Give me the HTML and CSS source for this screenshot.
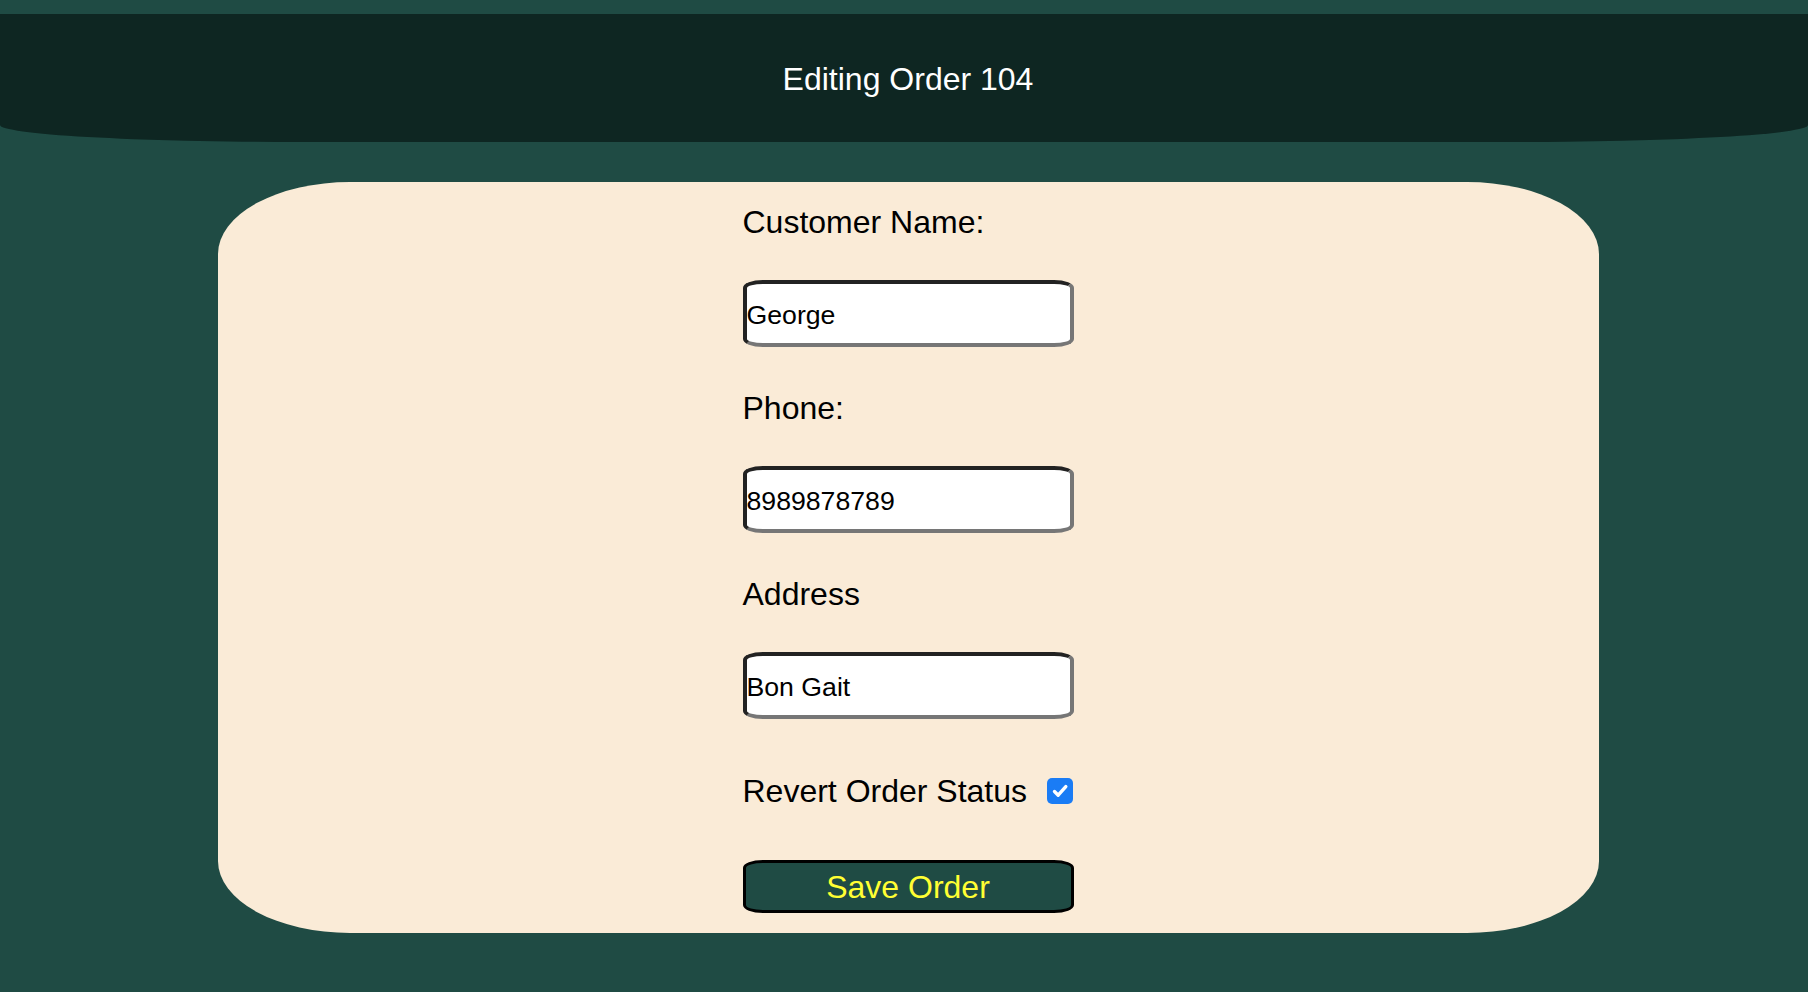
FILE: index.html
```html
<!DOCTYPE html>
<html lang="en">
<head>
<meta charset="utf-8">
<title>Editing Order 104</title>
<link rel="stylesheet" href="styles.css">
</head>
<body>
<header class="topbar">
  <h1 class="title">Editing Order 104</h1>
</header>
<main class="page">
  <form class="card">
    <div class="fields">
      <label class="label" for="name">Customer Name:</label>
      <input class="field" id="name" type="text" value="George">
      <label class="label" for="phone">Phone:</label>
      <input class="field" id="phone" type="text" value="8989878789">
      <label class="label" for="address">Address</label>
      <input class="field" id="address" type="text" value="Bon Gait">
      <div class="check-row">
        <span class="label-inline">Revert Order Status</span>
        <span class="checkbox" role="checkbox" aria-checked="true">
          <svg width="26" height="26" viewBox="0 0 26 26"><path d="M7.5 13.5 L11.2 17.2 L18.8 8.6" fill="none" stroke="#fff" stroke-width="3.4" stroke-linecap="round" stroke-linejoin="round"/></svg>
        </span>
      </div>
      <button class="save" type="button">Save Order</button>
    </div>
  </form>
</main>
</body>
</html>
```

FILE: styles.css
```css
html, body {
  margin: 0;
  padding: 0;
  background: #1f4b44;
  font-family: "Liberation Sans", Arial, Helvetica, sans-serif;
}

body {
  padding-top: 14px;
  min-height: 100vh;
  box-sizing: border-box;
}

.topbar {
  height: 128px;
  background: #0e2622;
  border-radius: 0 0 300px 300px / 0 0 17px 17px;
  display: flex;
  align-items: center;
  justify-content: center;
  padding-left: 8px;
  padding-top: 2px;
  box-sizing: border-box;
}

.title {
  margin: 0;
  font-size: 32px;
  font-weight: normal;
  line-height: 36px;
  color: #ffffff;
}

.page {
  display: flex;
  justify-content: center;
  padding: 40px 0 0 8px;
}

.card {
  width: 1381px;
  height: 751px;
  box-sizing: border-box;
  background: #faebd7;
  border-radius: 132px / 72px;
  padding-top: 22px;
  display: flex;
  justify-content: center;
  margin: 0;
}

.fields {
  width: 331px;
  display: flex;
  flex-direction: column;
  align-items: flex-start;
}

.label {
  display: block;
  font-size: 32px;
  line-height: 36px;
  color: #000;
}

.field + .label {
  margin-top: 43px;
}

.field {
  margin: 40px 0 0 0;
  width: 331px;
  height: 67px;
  box-sizing: border-box;
  border-style: solid;
  border-width: 4px;
  border-color: #222222 #767676 #767676 #222222;
  border-radius: 20px / 8px;
  background: #ffffff;
  color: #000;
  font-family: "Liberation Sans", Arial, Helvetica, sans-serif;
  font-size: 26.67px;
  padding: 4px 0 0 0;
  outline: none;
}

.check-row {
  margin-top: 54px;
  display: flex;
  align-items: center;
  height: 36px;
}

.label-inline {
  font-size: 32px;
  line-height: 36px;
  color: #000;
}

.checkbox {
  margin-left: 20px;
  width: 26px;
  height: 26px;
  border-radius: 5px;
  background: #1a7cf5;
  display: block;
}

.checkbox svg {
  display: block;
}

.save {
  margin-top: 51px;
  width: 331px;
  height: 53px;
  box-sizing: border-box;
  border: 3px solid #000;
  border-radius: 20px / 8px;
  background: #1f4b44;
  color: #ffff33;
  font-family: "Liberation Sans", Arial, Helvetica, sans-serif;
  font-size: 32px;
  line-height: 36px;
  padding: 0;
  cursor: pointer;
}
```
